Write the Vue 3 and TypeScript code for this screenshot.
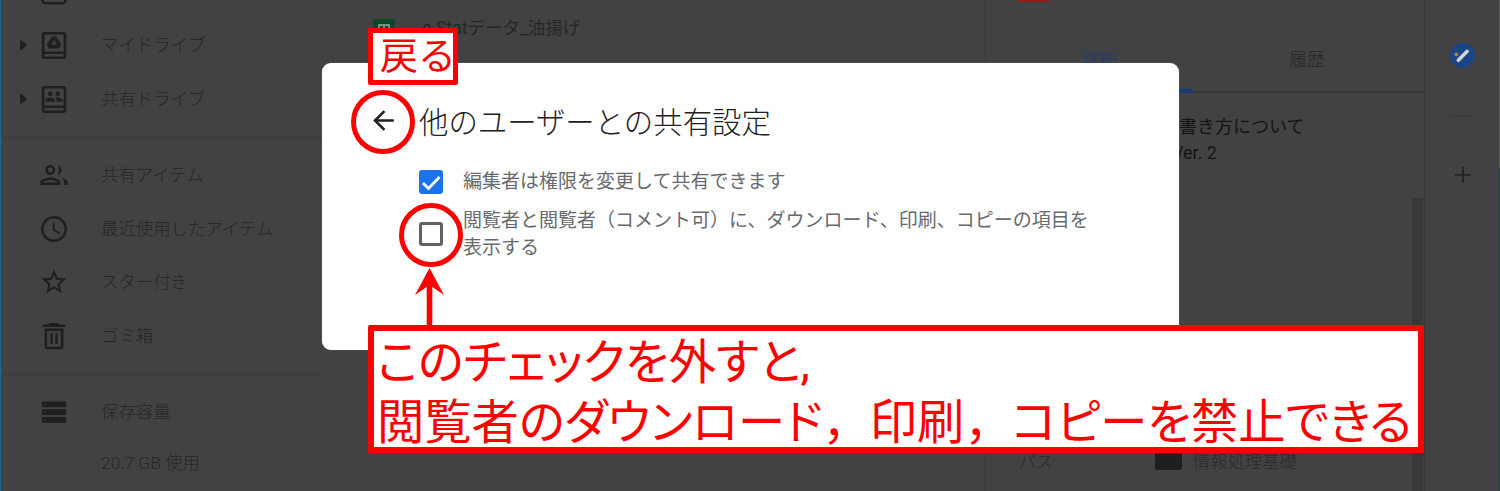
<script setup lang="ts">
interface NavItem {
  label: string
  icon: string
  caret?: boolean
}
const driveRows: NavItem[] = [
  { label: '', icon: 'computer' },
  { label: 'マイドライブ', icon: 'drive', caret: true },
  { label: '共有ドライブ', icon: 'shared', caret: true },
]
const viewRows: NavItem[] = [
  { label: '共有アイテム', icon: 'people' },
  { label: '最近使用したアイテム', icon: 'clock' },
  { label: 'スター付き', icon: 'star' },
  { label: 'ゴミ箱', icon: 'trash' },
]
</script>

<template>
  <div class="app">
    <aside class="sidebar">
      <div class="group first">
        <div v-for="row in driveRows" :key="row.icon" class="row">
          <span class="caret" :class="{ on: row.caret }"></span>
          <svg class="icon" viewBox="0 0 24 24">
            <template v-if="row.icon === 'computer'">
              <rect x="2.8" y="3" width="18.4" height="18" rx="2.5" fill="none" stroke="#1f1f1f" stroke-width="2" />
            </template>
            <template v-else-if="row.icon === 'drive'">
              <path fill-rule="evenodd" fill="#1f1f1f" d="M4.2 1.5h15.6c1.1 0 2 .9 2 2v17.6c0 1.1-.9 2-2 2H4.2c-1.1 0-2-.9-2-2V3.5c0-1.1.9-2 2-2zm.1 2v13.6h15.4V3.5H4.300zm0 15.600v2h15.400v-2H4.300z" />
              <path fill="#1f1f1f" d="M10.200 5.200h3.600l4 6.600-1.800 3H8l-1.800-3 4-6.600zm1.800 2.700-2.300 3.900h4.600L12 7.900z" />
            </template>
            <template v-else-if="row.icon === 'shared'">
              <path fill-rule="evenodd" fill="#1f1f1f" d="M4.200 1.500h15.600c1.100 0 2 .9 2 2v17.600c0 1.100-.9 2-2 2H4.200c-1.100 0-2-.9-2-2V3.500c0-1.100.9-2 2-2zm.1 2v13.600h15.400V3.500H4.300zm0 15.600v2h15.400v-2H4.300z" />
              <circle cx="9" cy="7.800" r="1.900" fill="#1f1f1f" />
              <circle cx="15" cy="7.800" r="1.900" fill="#1f1f1f" />
              <path fill="#1f1f1f" d="M5.200 14.200v-1.300c0-1.300 2.500-2.200 3.800-2.200s3.800.9 3.800 2.200v1.300H5.200zm8.900 0v-1.300c0-.8-.3-1.500-.9-2 .6-.1 1.300-.2 1.800-.2 1.300 0 3.800.9 3.800 2.200v1.300h-4.700z" />
            </template>
          </svg>
          <span class="label">{{ row.label }}</span>
        </div>
      </div>
      <div class="rule"></div>
      <div class="group">
        <div v-for="row in viewRows" :key="row.icon" class="row">
          <span class="caret"></span>
          <svg class="icon" viewBox="0 0 24 24">
            <path v-if="row.icon === 'people'" fill="#1f1f1f" d="M9 12c2.200 0 4-1.800 4-4s-1.800-4-4-4-4 1.800-4 4 1.800 4 4 4zm0-6c1.100 0 2 .9 2 2s-.9 2-2 2-2-.9-2-2 .9-2 2-2zm0 8c-2.700 0-8 1.300-8 4v2h16v-2c0-2.700-5.300-4-8-4zm-6 4c.2-.7 3.300-2 6-2s5.800 1.300 6 2H3zm12.100-13.900c.7 1 1 2.400.9 3.900s-.5 2.900-1.200 3.900c2-.2 3.200-1.800 3.200-3.900s-1-3.700-2.900-3.900zM18.500 14.500c.9.900 1.500 2.100 1.500 3.500v2h3v-2c0-2-2.500-3.100-4.500-3.500z" />
            <path v-else-if="row.icon === 'clock'" fill="#1f1f1f" d="M12 1.600C6.200 1.600 1.600 6.200 1.600 12S6.200 22.400 12 22.400 22.400 17.800 22.400 12 17.800 1.600 12 1.600zm0 18.800c-4.600 0-8.400-3.800-8.400-8.400S7.400 3.600 12 3.600s8.400 3.800 8.400 8.400-3.800 8.400-8.400 8.400zM12.500 6.800H11V13l5.300 3.200.8-1.300-4.600-2.700V6.800z" />
            <path v-else-if="row.icon === 'star'" fill="#1f1f1f" d="M22 9.240l-7.190-.62L12 2 9.190 8.630 2 9.240l5.460 4.730L5.820 21 12 17.270 18.180 21l-1.630-7.030L22 9.240zM12 15.400l-3.760 2.270 1-4.280-3.320-2.880 4.380-.38L12 6.100l1.710 4.040 4.380.38-3.320 2.880 1 4.280L12 15.400z" />
            <path v-else-if="row.icon === 'trash'" fill="#1f1f1f" d="M8.500 1.500h7l1 1.200H21v2H3v-2h4.500l1-1.200zM4.500 6h15v14.500c0 1.100-.9 2-2 2h-11c-1.100 0-2-.9-2-2V6zm2 2v12.500h11V8h-11zm2.500 1.800h2v8.500H9V9.800zm4 0h2v8.500h-2V9.800z" />
          </svg>
          <span class="label">{{ row.label }}</span>
        </div>
      </div>
      <div class="rule"></div>
      <div class="group">
        <div class="row">
          <span class="caret"></span>
          <svg class="icon" viewBox="0 0 24 24">
            <path fill="#1f1f1f" fill-rule="evenodd" d="M2.300 3.500h19.400v4.700H2.300V3.500zm0 6.200h19.400v4.700H2.300V9.700zm0 6.200h19.400v4.700H2.300v-4.700zM4 5.300v1.100h1.300V5.300H4zm0 6.200v1.100h1.300v-1.100H4zm0 6.200v1.100h1.300v-1.100H4z" />
          </svg>
          <span class="label">保存容量</span>
        </div>
        <div class="row usage">
          <span class="caret"></span>
          <span class="icon"></span>
          <span class="label">20.7 GB 使用</span>
        </div>
      </div>
    </aside>

    <main class="files">
      <div class="file">
        <svg class="sheet" viewBox="0 0 22 22">
          <rect width="22" height="22" rx="2" fill="#0b4a28" />
          <path d="M6 6h10v10H6z M11 6v10 M6 11h10" fill="none" stroke="#9aa79f" stroke-width="1.500" />
        </svg>
        <span class="file-name">e-Statデータ_油揚げ</span>
      </div>
    </main>

    <section class="details">
      <div class="pdf-badge"></div>
      <div class="tabs">
        <div class="tab active">詳細</div>
        <div class="tab">履歴</div>
      </div>
      <div class="doc-title">
        <div class="doc-main">レポートの書き方について</div>
        <div class="doc-sub">Ver. 2</div>
      </div>
      <div class="path-row">
        <span class="path-key">パス</span>
        <span class="folder"></span>
        <span class="path-val">情報処理基礎</span>
      </div>
      <div class="scroll-track"><div class="scroll-thumb"></div></div>
    </section>

    <nav class="rail">
      <svg class="task" viewBox="0 0 24 24">
        <circle cx="12" cy="12" r="12" fill="#1c4587" />
        <path d="M8 16.500 16.500 8" stroke="#d4d4d4" stroke-width="3.400" stroke-linecap="round" fill="none" />
        <circle cx="6" cy="11" r="1.800" fill="#a88a1e" />
      </svg>
      <div class="rail-rule"></div>
      <svg class="plus" viewBox="0 0 18 18">
        <path d="M9 1v16M1 9h16" stroke="#222" stroke-width="1.600" fill="none" />
      </svg>
    </nav>

    <div class="dialog">
      <div class="dialog-head">
        <svg class="back" viewBox="0 0 24 24">
          <path fill="#202124" d="M20 11H7.830l5.590-5.590L12 4l-8 8 8 8 1.410-1.410L7.830 13H20v-2z" />
        </svg>
        <h2 class="dialog-title">他のユーザーとの共有設定</h2>
      </div>
      <div class="option">
        <span class="box checked">
          <svg viewBox="0 0 24 24"><path d="M4 13 9.500 18.500 20.500 7" fill="none" stroke="#fff" stroke-width="2.800" /></svg>
        </span>
        <span class="option-text">編集者は権限を変更して共有できます</span>
      </div>
      <div class="option second">
        <span class="box"></span>
        <span class="option-text">閲覧者と閲覧者（コメント可）に、ダウンロード、印刷、コピーの項目を<br />表示する</span>
      </div>
    </div>

    <div class="note-back">戻る</div>
    <div class="ring ring-back"></div>
    <div class="ring ring-check"></div>
    <svg class="pointer" viewBox="0 0 29 58">
      <path d="M14.500 0 29 27 14.500 17 0 27Z" fill="#f00" />
      <path d="M14.500 15V58" stroke="#f00" stroke-width="5.600" />
    </svg>
    <div class="note-main">このチェックを外すと,<br />閲覧者のダウンロード<span class="wide">，</span>印刷<span class="wide">，</span>コピーを禁止できる</div>
  </div>
</template>

<style>
html, body { margin: 0; padding: 0; background: #424242; }
</style>

<style scoped>
.app {
  position: relative;
  display: flex;
  width: 1500px;
  height: 491px;
  overflow: hidden;
  background: #424242;
  font-family: Roboto, "Noto Sans CJK JP", sans-serif;
  color: #2a2a2a;
}
.sidebar {
  flex: 0 0 322px;
  border-left: 1px solid #1a6b90;
  box-sizing: border-box;
}
.group.first { margin-top: -35px; }
.row {
  display: flex;
  align-items: center;
  height: 53.5px;
  padding-left: 19px;
}
.row.usage { height: 47px; }
.caret { width: 8px; height: 12px; margin-right: 11px; flex: none; }
.caret.on {
  width: 0;
  height: 0;
  margin-right: 12px;
  border-left: 7px solid #1f1f1f;
  border-top: 6px solid transparent;
  border-bottom: 6px solid transparent;
}
.icon { width: 30px; height: 30px; flex: none; margin-right: 32px; }
.label { font-size: 17.4px; font-weight: 300; color: #262626; white-space: nowrap; padding-bottom: 3px; }
.rule { height: 1px; background: #3a3a3a; margin: 11.5px 0 10.5px; }

.files { flex: 0 0 663px; padding: 19px 0 0 51px; box-sizing: border-box; }
.file { display: flex; align-items: flex-start; }
.sheet { width: 22px; height: 22px; margin-right: 27px; flex: none; }
.file-name { font-size: 17.5px; font-weight: 400; color: #262626; white-space: nowrap; line-height: 18px; }

.details {
  position: relative;
  flex: 0 0 440px;
  box-sizing: border-box;
  border-left: 1px solid #393939;
  border-right: 1px solid #393939;
}
.pdf-badge { width: 31px; height: 2px; margin-left: 32px; background: #8c1f17; }
.tabs {
  display: flex;
  height: 91px;
  box-sizing: border-box;
  padding-left: 9px;
  border-bottom: 2px solid #393939;
}
.tab {
  flex: 0 0 208px;
  text-align: center;
  font-size: 18px;
  font-weight: 300;
  line-height: 116px;
  color: #262626;
  position: relative;
}
.tab.active { color: #1a3f78; }
.tab.active::after {
  content: "";
  position: absolute;
  left: 0;
  right: 10px;
  bottom: -2px;
  height: 4px;
  background: #173a78;
}
.doc-title { padding: 20px 0 0 103px; color: #141414; white-space: nowrap; }
.doc-main { font-size: 18px; line-height: 27px; }
.doc-sub { font-size: 18px; line-height: 26px; margin-left: 83px; }
.path-row {
  display: flex;
  align-items: center;
  position: absolute;
  left: 33px;
  top: 447px;
  height: 26px;
  color: #2a2a2a;
  white-space: nowrap;
}
.path-key { font-size: 17px; font-weight: 300; width: 136px; }
.folder { width: 27px; height: 20px; background: #1f1f1f; border-radius: 2px; margin-right: 11px; }
.path-val { font-size: 17.3px; font-weight: 300; }
.scroll-track {
  position: absolute;
  right: 0;
  top: 0;
  bottom: 0;
  width: 13px;
  padding-top: 198px;
  box-sizing: border-box;
}
.scroll-thumb { width: 11px; height: 293px; margin-left: 1px; background: #383838; }

.rail {
  flex: 1;
  display: flex;
  flex-direction: column;
  align-items: center;
  padding-top: 43px;
  background:
    linear-gradient(#5c5c5c, #5c5c5c) right top / 1px 168px no-repeat,
    linear-gradient(#1c3f72, #1c3f72) right 168px / 1px 323px no-repeat;
}
.task { width: 25px; height: 25px; }
.rail-rule { width: 26px; height: 1px; background: #393939; margin-top: 47px; }
.plus { width: 18px; height: 18px; margin-top: 50px; }

.dialog {
  position: absolute;
  left: 322px;
  top: 63px;
  width: 857px;
  height: 287px;
  box-sizing: border-box;
  background: #fff;
  border-radius: 9px;
  box-shadow: 0 0 1px #999;
  padding: 28px 0 0 46px;
}
.dialog-head { display: flex; align-items: center; height: 58px; }
.back { width: 31px; height: 31px; margin-right: 20px; flex: none; }
.dialog-title {
  margin: 0;
  font-size: 29.4px;
  font-weight: 300;
  color: #202124;
  white-space: nowrap;
}
.option { display: flex; align-items: center; padding-left: 51px; margin-top: 19px; }
.option.second { margin-top: 12px; }
.box {
  flex: none;
  width: 24px;
  height: 24px;
  box-sizing: border-box;
  border: 3px solid #5f6368;
  border-radius: 3px;
  margin-right: 20px;
}
.box.checked { background: #1a73e8; border: none; }
.box svg { display: block; width: 24px; height: 24px; }
.option-text {
  font-size: 19px;
  line-height: 27px;
  font-weight: 400;
  color: #666a6e;
  white-space: nowrap;
}

.note-back {
  position: absolute;
  left: 368px;
  top: 28px;
  width: 90px;
  height: 57px;
  box-sizing: border-box;
  border: 5px solid #f00;
  border-radius: 2px;
  background: #fff;
  color: #f00;
  font-size: 38px;
  line-height: 47px;
  padding-left: 7px;
  white-space: nowrap;
}
.ring {
  position: absolute;
  width: 64px;
  height: 64px;
  box-sizing: border-box;
  border: 5.5px solid #f00;
  border-radius: 50%;
}
.ring-back { left: 351px; top: 90px; }
.ring-check { left: 399px; top: 203px; }
.pointer { position: absolute; left: 415px; top: 268px; width: 29px; height: 58px; }
.note-main {
  position: absolute;
  left: 368px;
  top: 325px;
  width: 1056px;
  height: 128px;
  box-sizing: border-box;
  border: 6px solid #f00;
  border-radius: 2px;
  background: #fff;
  color: #f00;
  font-size: 47.3px;
  font-feature-settings: "palt";
  line-height: 60px;
  padding: 2px 0 0 3px;
  white-space: nowrap;
}
.wide { font-feature-settings: normal; }
</style>
